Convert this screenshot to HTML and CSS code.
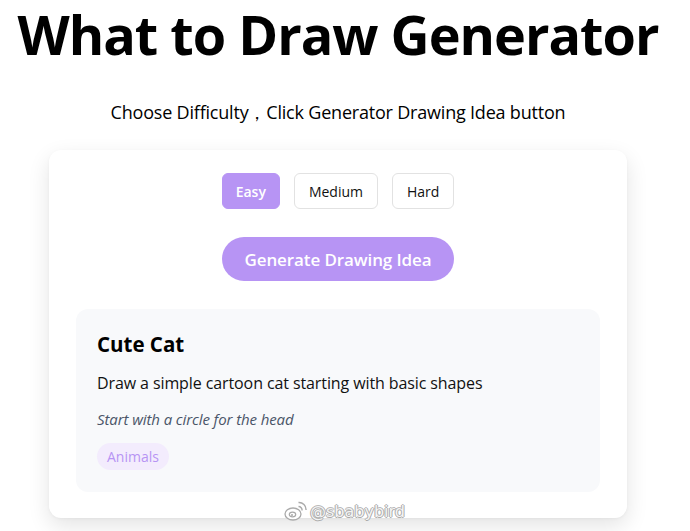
FILE: index.html
```html
<!DOCTYPE html>
<html lang="en">
<head>
<meta charset="utf-8">
<link rel="stylesheet" href="styles.css">
</head>
<body>
<div class="page">
  <h1 class="title">What to Draw Generator</h1>
  <p class="subtitle">Choose Difficulty，Click Generator Drawing Idea button</p>
  <div class="card">
    <div class="levels">
      <button class="level active">Easy</button>
      <button class="level">Medium</button>
      <button class="level">Hard</button>
    </div>
    <div class="gen-row">
      <button class="generate">Generate Drawing Idea</button>
    </div>
    <div class="idea">
      <h2 class="idea-title">Cute Cat</h2>
      <p class="idea-desc">Draw a simple cartoon cat starting with basic shapes</p>
      <p class="idea-tip">Start with a circle for the head</p>
      <span class="tag">Animals</span>
    </div>
  </div>
  <div class="watermark">
    <svg class="wm-icon" width="23" height="20" viewBox="0 0 23 20">
      <ellipse cx="9" cy="13" rx="8" ry="6" fill="#fff" stroke="#aaa" stroke-width="1.3"/>
      <ellipse cx="8.5" cy="13.5" rx="3.2" ry="2.4" fill="none" stroke="#aaa" stroke-width="1.2"/>
      <circle cx="8" cy="14" r="1" fill="#aaa"/>
      <path d="M14.5 5.5 a3.5 3.5 0 0 1 3.5 4" fill="none" stroke="#aaa" stroke-width="1.4"/>
      <path d="M14.5 1.5 a7 7 0 0 1 7.5 7.5" fill="none" stroke="#aaa" stroke-width="1.4"/>
    </svg>
    <span class="wm-text">@sbabybird</span>
  </div>
</div>
</body>
</html>
```

FILE: styles.css
```css
* { box-sizing: border-box; }
html, body { margin: 0; padding: 0; background: #fff; }
body {
  font-family: "Open Sans", "Noto Sans", sans-serif;
  color: #000;
}
.page {
  width: 676px;
  position: relative;
  height: 531px;
  overflow: hidden;
}
.title {
  margin: 0;
  padding-top: 2px;
  text-align: center;
  font-size: 54px;
  line-height: 64px;
  font-weight: 700;
  letter-spacing: -1px;
}
.subtitle {
  margin: 34px 0 0;
  text-align: center;
  font-size: 18px;
  line-height: 24px;
  letter-spacing: -0.2px;
}
.card {
  margin: 26px 49px 0;
  background: #fff;
  border-radius: 12px;
  box-shadow: 0 8px 22px rgba(0,0,0,0.11), 0 1px 3px rgba(0,0,0,0.04);
  padding: 23px 27px 26px;
}
.levels {
  display: flex;
  justify-content: center;
  gap: 14px;
}
.level {
  height: 36px;
  padding: 0 14px;
  border: 1px solid #e2e2e2;
  background: #fff;
  border-radius: 6px;
  font-family: inherit;
  font-size: 14px;
  color: #111;
}
.level.active {
  background: #b794f4;
  border-color: #b794f4;
  color: #fff;
  font-weight: 600;
  padding: 0 13px;
}
.gen-row {
  display: flex;
  justify-content: center;
  margin-top: 28px;
}
.generate {
  width: 232px;
  height: 44px;
  border: none;
  border-radius: 22px;
  background: #b794f4;
  color: #fff;
  font-family: inherit;
  font-size: 17px;
  font-weight: 600;
  letter-spacing: -0.1px;
}
.idea {
  margin-top: 28px;
  background: #f8f9fb;
  border-radius: 12px;
  padding: 21px 21px 22px;
}
.idea-title {
  margin: 0;
  font-size: 20.5px;
  line-height: 28px;
  font-weight: 700;
}
.idea-desc {
  margin: 13px 0 0;
  font-size: 16px;
  line-height: 24px;
  color: #111;
  letter-spacing: -0.1px;
}
.idea-tip {
  margin: 14px 0 0;
  font-size: 15px;
  line-height: 20px;
  font-style: italic;
  color: #4a5568;
  letter-spacing: -0.1px;
}
.tag {
  display: inline-block;
  margin-top: 14px;
  padding: 0 10px;
  height: 27px;
  line-height: 27px;
  border-radius: 14px;
  background: #f3ecfd;
  color: #b794f4;
  font-size: 14px;
}
.watermark {
  position: absolute;
  left: 284px;
  top: 501px;
  display: flex;
  align-items: center;
  gap: 3px;
}
.wm-text {
  font-family: "DejaVu Sans", sans-serif;
  font-size: 16px;
  color: #f4f4f4;
  text-shadow: 1px 0 0 #aaa, -1px 0 0 #aaa, 0 1px 0 #aaa, 0 -1px 0 #bbb;
}
```
